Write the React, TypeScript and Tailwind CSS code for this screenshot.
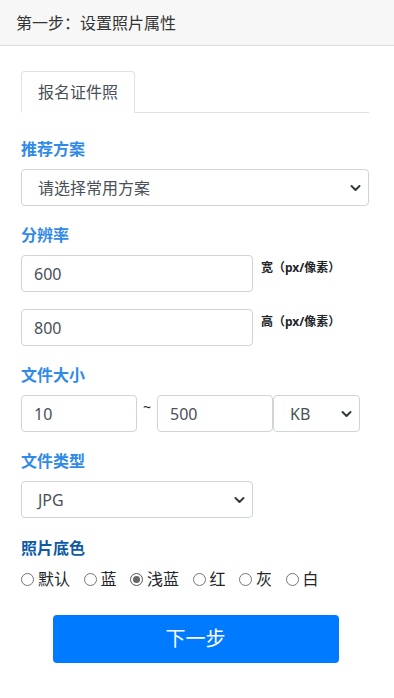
import React from "react";

const font = { fontFamily: '"Segoe UI", "Noto Sans", "Noto Sans CJK SC", sans-serif' };

function Chevron() {
  return (
    <svg width="11" height="8" viewBox="0 0 11 8" className="absolute right-[7px] top-1/2 -translate-y-1/2 pointer-events-none">
      <path d="M1.5 2 L5.5 6 L9.5 2" fill="none" stroke="#343a40" strokeWidth="2" strokeLinecap="round" strokeLinejoin="round" />
    </svg>
  );
}

function Box({ className, children, pl = "pl-[12px]" }: { className: string; children: React.ReactNode; pl?: string }) {
  return (
    <div className={`relative h-[37px] border border-[#ced4da] rounded-[4px] bg-white flex items-center ${pl} text-[16px] text-[#495057] ${className}`}>
      {children}
    </div>
  );
}

function Label({ children, color = "text-[#2f8ae8]", className = "" }: { children: React.ReactNode; color?: string; className?: string }) {
  return <div className={`h-6 leading-6 text-[16px] font-bold ${color} mb-2 ${className}`}>{children}</div>;
}

function Radio({ label, checked }: { label: string; checked?: boolean }) {
  return (
    <div className="flex items-center">
      <span className={`w-[13px] h-[13px] rounded-full border ${checked ? "border-[#555]" : "border-[#767676]"} flex items-center justify-center bg-white`}>
        {checked && <span className="w-[7px] h-[7px] rounded-full bg-[#666]" />}
      </span>
      <span className="ml-[4px] text-[16px] text-[#212529] leading-6">{label}</span>
    </div>
  );
}

export default function App() {
  return (
    <div className="w-[394px] h-[698px] bg-white" style={font}>
      <div className="h-[46px] bg-[#f7f7f7] border-b border-[#dcdcdc] flex items-center pl-[16px] text-[16px] text-[#333]">
        第一步：设置照片属性
      </div>
      <div className="px-[21px] pt-[25px]">
        <div className="w-[348px] flex border-b border-[#dee2e6]">
          <div className="h-[42px] w-[114px] -mb-px border border-[#dee2e6] border-b-white rounded-t-[4px] flex items-center justify-center text-[16px] text-[#495057] bg-white">
            报名证件照
          </div>
        </div>

        <Label className="mt-[24px]">推荐方案</Label>
        <Box className="w-[348px]" pl="pl-[16px]">
          请选择常用方案
          <Chevron />
        </Box>

        <Label className="mt-[17px]">分辨率</Label>
        <div className="flex">
          <Box className="w-[232px]">600</Box>
          <div className="ml-[8px] mt-[5px] text-[12px] font-bold text-[#212529] leading-4">宽（px/像素）</div>
        </div>
        <div className="flex mt-[17px]">
          <Box className="w-[232px]">800</Box>
          <div className="ml-[8px] mt-[5px] text-[12px] font-bold text-[#212529] leading-4">高（px/像素）</div>
        </div>

        <Label className="mt-[17px]">文件大小</Label>
        <div className="flex">
          <Box className="w-[116px]">10</Box>
          <div className="w-[20px] text-center text-[14px] text-[#212529] leading-4 pt-[4px]">~</div>
          <Box className="w-[116px]">500</Box>
          <Box className="w-[87px]" pl="pl-[16px]">
            KB
            <Chevron />
          </Box>
        </div>

        <Label className="mt-[17px]">文件类型</Label>
        <Box className="w-[232px]" pl="pl-[16px]">
          JPG
          <Chevron />
        </Box>

        <Label className="mt-[18px]" color="text-[#0d5aa7]">照片底色</Label>
        <div className="flex gap-[13.5px] -mt-[1px]">
          <Radio label="默认" />
          <Radio label="蓝" />
          <Radio label="浅蓝" checked />
          <Radio label="红" />
          <Radio label="灰" />
          <Radio label="白" />
        </div>

        <div className="flex justify-center mt-[24px] pr-[3px]">
          <button className="w-[286px] h-[48px] bg-[#007bff] rounded-[4px] text-white text-[20px]">下一步</button>
        </div>
      </div>
    </div>
  );
}
